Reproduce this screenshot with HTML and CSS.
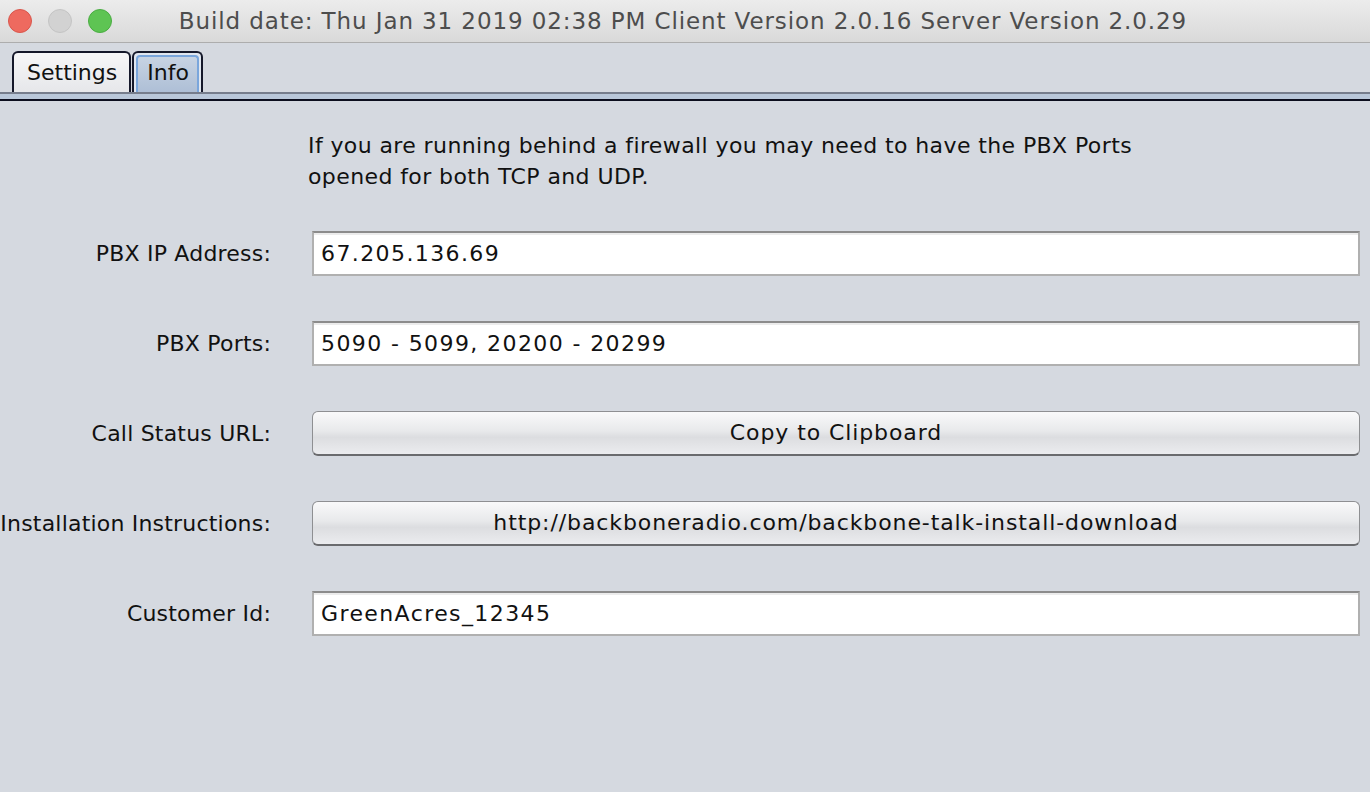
FILE: index.html
```html
<!DOCTYPE html>
<html>
<head>
<meta charset="utf-8">
<link rel="stylesheet" href="styles.css">
</head>
<body>
<div class="window">
  <div class="titlebar">
    <div class="lights">
      <span class="light red"></span>
      <span class="light grey"></span>
      <span class="light green"></span>
    </div>
    <div class="title">Build date: Thu Jan 31 2019 02:38 PM Client Version 2.0.16 Server Version 2.0.29</div>
  </div>
  <div class="tabbar">
    <div class="tabs">
      <div class="tab">Settings</div>
      <div class="tab active"><span>Info</span></div>
    </div>
    <div class="tabline"></div>
  </div>
  <div class="content">
    <div class="desc">If you are running behind a firewall you may need to have the PBX Ports<br>opened for both TCP and UDP.</div>
    <div class="form">
      <div class="label">PBX IP Address:</div>
      <div class="field">67.205.136.69</div>
      <div class="label">PBX Ports:</div>
      <div class="field">5090 - 5099, 20200 - 20299</div>
      <div class="label">Call Status URL:</div>
      <div class="button">Copy to Clipboard</div>
      <div class="label">Installation Instructions:</div>
      <div class="button">http://backboneradio.com/backbone-talk-install-download</div>
      <div class="label">Customer Id:</div>
      <div class="field">GreenAcres_12345</div>
    </div>
  </div>
</div>
</body>
</html>
```
FILE: styles.css
```css
html, body {
  margin: 0;
  padding: 0;
}
body {
  width: 1370px;
  height: 792px;
  overflow: hidden;
  background: #d5d9e0;
  font-family: "DejaVu Sans", "Lucida Grande", sans-serif;
  color: #111;
}
.window {
  display: flex;
  flex-direction: column;
  height: 792px;
}
.titlebar {
  height: 42px;
  flex: none;
  background: linear-gradient(#ececec, #d9d9d9);
  border-bottom: 1px solid #adadad;
  display: flex;
  align-items: center;
}
.lights {
  display: flex;
  gap: 16px;
  padding-left: 8px;
}
.light {
  width: 24px;
  height: 24px;
  border-radius: 50%;
  box-sizing: border-box;
}
.light.red { background: #ee6a5f; border: 1px solid #d9564c; }
.light.grey { background: #d2d2d2; border: 1px solid #c4c4c4; }
.light.green { background: #5ec453; border: 1px solid #4aad42; }
.title {
  flex: 1;
  text-align: center;
  font-size: 23px;
  letter-spacing: 0.9px;
  color: #4d4d4d;
  margin-left: -116px;
  white-space: nowrap;
}
.tabbar {
  flex: none;
  padding-top: 8px;
}
.tabs {
  display: flex;
  padding-left: 12px;
  height: 41px;
  align-items: flex-end;
}
.tab {
  height: 41px;
  box-sizing: border-box;
  border: 2px solid #15182a;
  border-bottom: none;
  border-radius: 6px 6px 0 0;
  background: linear-gradient(#f7f7f8, #e6e7ea);
  font-size: 22px;
  padding: 7px 12px 0 13px;
  color: #111;
}
.tab.active {
  margin-left: 1px;
  padding: 2px 2px 0;
  background: #e0e6ef;
}
.tab.active span {
  display: block;
  height: 100%;
  box-sizing: border-box;
  border: 2px solid #7aa6dc;
  border-bottom: none;
  border-radius: 4px 4px 0 0;
  background: linear-gradient(#c7d3e3, #aebfd6);
  padding: 3px 8px 0 9px;
}
.tabline {
  height: 5px;
  border-top: 2px solid #767d8c;
  background: #b9c7d9;
  border-bottom: 2px solid #0c0e1e;
}
.content {
  flex: 1;
  padding-top: 29px;
}
.desc {
  margin-left: 308px;
  font-size: 22px;
  letter-spacing: 0.4px;
  line-height: 31px;
  color: #111;
}
.form {
  display: grid;
  grid-template-columns: 271px 1fr;
  column-gap: 41px;
  row-gap: 45px;
  padding-right: 10px;
  margin-top: 39px;
  align-items: center;
}
.label {
  text-align: right;
  font-size: 22px;
  letter-spacing: 0.2px;
  white-space: nowrap;
  color: #111;
}
.field {
  height: 45px;
  box-sizing: border-box;
  background: #fff;
  border: 2px solid #b0b0b0;
  border-top-color: #8c8c8c;
  box-shadow: inset 0 2px 0 #ececec;
  font-size: 22px;
  padding: 8px 0 0 7px;
  letter-spacing: 1.4px;
}
.button {
  height: 45px;
  box-sizing: border-box;
  border: 1.5px solid #8e8f92;
  border-bottom: 2px solid #6a6b6e;
  border-radius: 6px;
  background: linear-gradient(#f9f9fa 0%, #e8e9eb 45%, #dcdde0 60%, #ebecef 100%);
  text-align: center;
  font-size: 22px;
  letter-spacing: 0.9px;
  padding-top: 8px;
  color: #111;
}
```
